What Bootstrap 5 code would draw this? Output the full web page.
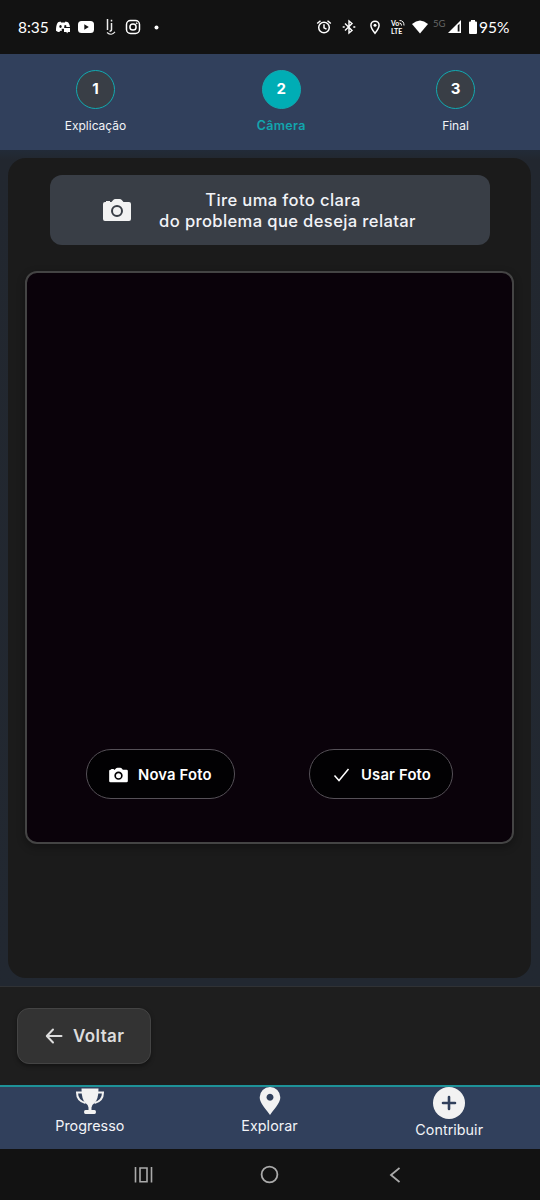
<!DOCTYPE html>
<html lang="pt-BR">
<head>
<meta charset="utf-8">
<meta name="viewport" content="width=device-width, initial-scale=1">
<title>Contribuir - Câmera</title>
<link href="https://cdn.jsdelivr.net/npm/bootstrap@5.3.0/dist/css/bootstrap.min.css" rel="stylesheet">
<style>
body{font-family:Inter,"Liberation Sans",sans-serif;background:#1e1e1e;color:#f2f3f7;height:1200px;overflow:hidden}
svg{display:block;flex:none}
.txt{white-space:nowrap;line-height:20px}
.statusbar{height:54px;background:#121212;display:grid;grid-template-columns:37px 23px 25px 22px 29px 162px 26px 25px 24px 21px 21px 15px 20px 11px auto;padding-left:18px;color:#fff;font-family:Lato,sans-serif}
.clock{font-size:15.5px}
.volte{font:bold 7px/8px Lato,sans-serif}
.fiveg{font-size:9.5px;color:#666;margin-top:-7px}
.steps{height:96px;background:#31405c;padding:15.5px 65px 0 64.5px}
.step-a{width:62px}.step-b{width:50px}.step-c{width:39px}
.dot-num{width:39px;height:39px;border:1px solid #12aab0;background:#393e46;font-size:15px;color:#fff}
.current .dot-num{background:#00adb5}
.current .txt{color:#12a5ae;font-weight:600;font-size:12.5px;letter-spacing:.3px}
.step-label{font-size:12px;margin-top:7.5px}
.stage{height:836px;padding:8px 9px 8px 8px;background:linear-gradient(#222b38,#22272f 10px,#222831)}
.panel{height:820px;border-radius:18px;background:#1b1b1b;padding:17px 17px 0}
.tip{width:440px;height:70px;border-radius:12px;background:#393e46;padding-left:53px;font-size:16.6px;font-weight:500}
.tip-text{width:258px;margin-left:28px;line-height:21px;margin-top:1px;letter-spacing:.36px}
.tip-first{padding-right:9px}
.photo{height:573px;margin-top:26px;border:2px solid #444;border-radius:12px;background:#0a020a;padding:0 59px 43px;box-shadow:0 3px 8px #0005}
.pill{height:50px;border:1px solid #555057;border-radius:25px;background:#020103;color:#fff;font-size:14.8px;font-weight:600;letter-spacing:.17px;padding:0;padding-top:1px}
.pill-new{width:149px;padding-left:22px;gap:10px}
.pill-use{width:144px;padding-left:23px;gap:11px;letter-spacing:.18px}
.actions{height:99px;border-top:1px solid #303235;background:#1e1e1e;padding:21px 17px}
.back{width:134px;height:56px;background:#333;border:1px solid #444;border-radius:12px;padding:0 0 0 27px;gap:10px;color:#ddd;font-size:17px;font-weight:600;letter-spacing:.4px;box-shadow:0 2px 4px #0006}
.tabs{height:64px;background:#31405c;border-top:2px solid #1e9299;padding-right:1px;font-size:14.3px;letter-spacing:.05px}
.tabs .txt{margin-top:.7px}
.sysnav{height:51px;background:#121212;display:grid;grid-template-columns:126px 126px 1fr;padding-left:134px}
</style>
</head>
<body>
<div class="statusbar align-items-center">
  <span class="txt clock">8:35</span>
  <svg width="16" height="16" viewBox="0 0 16 16"><path fill="#fff" fill-rule="evenodd" d="M5.500 2.500 3 3.200C1.300 5.500 1 8 1 11.700 2 12.500 3.300 13 4.400 13l.8-1.300 1.500.3V9.700h2.500V8H15C14.600 5.500 13.800 3.800 13 3.200L10.500 2.500 9.900 3.500H6.100zM5.500 6a1.200 1.500 0 1 0 .01 0zM10.300 6a1.200 1.500 0 0 0-1 2h2a1.200 1.500 0 0 0-1-2z"/><path fill="#fff" d="M9 9h6v4h-2l-1 1.500-.5-1.500H9z"/></svg>
  <svg width="16" height="16" viewBox="0 0 16 16"><rect y="2" width="16" height="12" rx="3.500" fill="#fff"/><path fill="#121212" d="m6.300 5.300 4.500 2.700-4.500 2.700z"/></svg>
  <svg width="16" height="18" viewBox="0 0 16 18"><g fill="none" stroke="#eee" stroke-width="1.500"><path d="M4.500 1v11M8.500 5v6.500q0 1.700-2 1.700M8.500 1.800v1.600"/><path d="M4 14.500q4.500 3.800 8-.6" stroke-width="1.100"/></g></svg>
  <svg width="16" height="16" viewBox="0 0 16 16" fill="none" stroke="#fff" stroke-width="1.500"><rect x="1.500" y="1.500" width="13" height="13" rx="4"/><circle cx="8" cy="8" r="3.100"/><circle cx="11.700" cy="4.300" r=".6" fill="#fff" stroke-width=".6"/></svg>
  <svg width="5" height="5"><circle cx="2.500" cy="2.500" r="2" fill="#fff"/></svg>
  <svg width="16" height="16" viewBox="0 0 16 16" fill="none" stroke="#fff" stroke-width="1.500"><circle cx="8" cy="8.500" r="5.300"/><path d="M8 5.200v3.600l2.500 1.400M1.200 4.500 4.500 1.700M14.800 4.500l-3.300-2.800"/></svg>
  <svg width="14" height="16" viewBox="0 0 14 16" fill="none" stroke="#fff" stroke-width="1.400"><path d="m3 4.500 7 7L7 14V2l3 2.500-7 7"/><path d="M.7 8h2M11.300 8h2" stroke-width="1.700"/></svg>
  <svg width="16" height="16" viewBox="0 0 16 16"><path d="M8 14.300C5.500 11.300 3.900 8.800 3.900 6.300a4.100 4.100 0 0 1 8.200 0C12.100 8.800 10.500 11.300 8 14.300z" fill="none" stroke="#fff" stroke-width="1.500"/><circle cx="8" cy="6.300" r="1.500" fill="#fff"/></svg>
  <div class="volte"><div class="d-flex">Vo<svg width="6" height="7" viewBox="0 0 6 7" fill="none" stroke="#fff"><path d="M.5 1.500q4.500 0 4.500 5M.5 4q2 0 2 2.500"/></svg></div>LTE</div>
  <svg width="16" height="14" viewBox="0 0 16 14"><path fill="#fff" d="M0 4q8-7 16 0l-8 9.500z"/></svg>
  <span class="txt fiveg">5G</span>
  <svg width="14" height="14" viewBox="0 0 14 14"><path fill="#fff" d="M0 13 13 0v13z"/><path fill="#121212" d="M9.700 5.500 11.500 3.700v7.800H9.700z"/></svg>
  <svg width="10" height="14" viewBox="0 0 10 14"><path fill="#fff" d="M3 0h4v1.500h1q1 0 1 1V13q0 1-1 1H2q-1 0-1-1V2.500q0-1 1-1h1z"/></svg>
  <span class="txt clock">95%</span>
</div>

<header class="steps d-flex justify-content-between">
  <div class="step-a d-flex flex-column align-items-center">
    <div class="dot-num rounded-circle d-flex align-items-center justify-content-center fw-bold">1</div>
    <div class="txt step-label">Explicação</div>
  </div>
  <div class="step-b current d-flex flex-column align-items-center">
    <div class="dot-num rounded-circle d-flex align-items-center justify-content-center fw-bold">2</div>
    <div class="txt step-label">Câmera</div>
  </div>
  <div class="step-c d-flex flex-column align-items-center">
    <div class="dot-num rounded-circle d-flex align-items-center justify-content-center fw-bold">3</div>
    <div class="txt step-label">Final</div>
  </div>
</header>

<main class="stage">
  <section class="panel">
    <div class="tip mx-auto d-flex align-items-center">
      <svg width="28" height="24" viewBox="0 0 28 24"><path fill="#f2f2f2" d="M2 4h1V3h4v1h1.500L10 2.300Q11 1 12.500 1h4Q18 1 19 2.300L20.500 4H26q2 0 2 2v15q0 2-2 2H2q-2 0-2-2V6q0-2 2-2z"/><circle cx="14" cy="13" r="5" fill="none" stroke="#393e46" stroke-width="2"/></svg>
      <div class="tip-text text-center text-nowrap"><div class="tip-first">Tire uma foto clara</div>do problema que deseja relatar</div>
    </div>
    <div class="photo d-flex align-items-end justify-content-between">
      <button class="pill pill-new d-flex align-items-center"><svg width="19" height="16" viewBox="0 0 28 24"><path fill="#fff" d="M2 4h1V3h4v1h1.500L10 2.300Q11 1 12.500 1h4Q18 1 19 2.300L20.500 4H26q2 0 2 2v15q0 2-2 2H2q-2 0-2-2V6q0-2 2-2z"/><circle cx="14" cy="13" r="5" fill="none" stroke="#020103" stroke-width="2.500"/></svg><span class="txt">Nova Foto</span></button>
      <button class="pill pill-use d-flex align-items-center"><svg width="17" height="16" viewBox="0 0 17 16"><path d="m1.500 8.500 4.500 5L15.500 2" fill="none" stroke="#fff" stroke-width="1.500"/></svg><span class="txt">Usar Foto</span></button>
    </div>
  </section>
</main>

<section class="actions">
  <button class="back d-flex align-items-center"><svg width="18" height="16" viewBox="0 0 18 16"><path d="M8 1.500 1.800 8 8 14.500M2 8h14.500" fill="none" stroke="#ddd" stroke-width="2" stroke-linecap="round" stroke-linejoin="round"/></svg><span class="txt">Voltar</span></button>
</section>

<nav class="tabs row g-0">
  <div class="col d-flex flex-column align-items-center"><svg width="30" height="28" viewBox="0 0 30 28"><path fill="#f2f2f2" d="M6.500 1.500h17q0 11-4 14.500-3 2-3 4.500v2.500h3q1.500 0 1.500 2t-1.500 2h-9Q9 27 9 25t1.500-2h3v-2.500q0-2.500-3-4.500Q6.500 12.500 6.500 1.500z"/><path d="M7.500 5.500H2q0 8.500 8.500 10.500M22.500 5.500H28q0 8.500-8.500 10.500" fill="none" stroke="#f2f2f2" stroke-width="2"/></svg><span class="txt">Progresso</span></div>
  <div class="col d-flex flex-column align-items-center"><svg width="22" height="28" viewBox="0 0 22 28"><path fill="#f2f2f2" fill-rule="evenodd" d="M11 28C5 20 .7 15.500.7 10.300a10.300 10.300 0 0 1 20.600 0C21.300 15.500 17 20 11 28zM11 6.800a3.500 3.500 0 1 0 .01 0z"/></svg><span class="txt">Explorar</span></div>
  <div class="col d-flex flex-column align-items-center"><svg width="32" height="32" viewBox="0 0 32 32"><circle cx="16" cy="16" r="16" fill="#f2f2f2"/><path d="M16 10v12M10 16h12" stroke="#31405c" stroke-width="2.600" stroke-linecap="round"/></svg><span class="txt">Contribuir</span></div>
</nav>
<div class="sysnav align-items-center">
  <svg width="19" height="16" viewBox="0 0 19 16" fill="none" stroke="#aaa" stroke-width="1.600"><path d="M1.500 0v15.500M17.500 0v15.500M6 1h7v13.700H6z"/></svg>
  <svg width="19" height="19" viewBox="0 0 19 19"><circle cx="9.500" cy="9.500" r="7.900" fill="none" stroke="#aaa" stroke-width="1.800"/></svg>
  <svg width="14" height="16" viewBox="0 0 14 16"><path d="M13.500 1 5 8l8.500 7" fill="none" stroke="#aaa" stroke-width="1.800"/></svg>
</div>
<script src="https://cdn.jsdelivr.net/npm/bootstrap@5.3.0/dist/js/bootstrap.bundle.min.js"></script>
</body>
</html>
